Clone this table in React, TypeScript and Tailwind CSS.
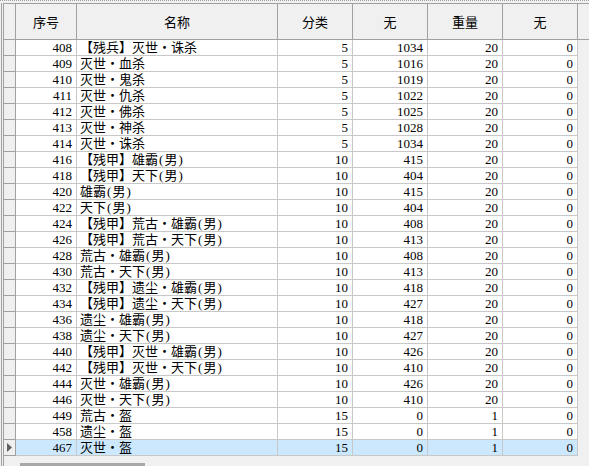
import React from 'react';

// 数据表格：装备列表
const ROWS: [number, string, number, number, number, number][] = [
    [408, '【残兵】灭世・诛杀', 5, 1034, 20, 0],
    [409, '灭世・血杀', 5, 1016, 20, 0],
    [410, '灭世・鬼杀', 5, 1019, 20, 0],
    [411, '灭世・仇杀', 5, 1022, 20, 0],
    [412, '灭世・佛杀', 5, 1025, 20, 0],
    [413, '灭世・神杀', 5, 1028, 20, 0],
    [414, '灭世・诛杀', 5, 1034, 20, 0],
    [416, '【残甲】雄霸(男)', 10, 415, 20, 0],
    [418, '【残甲】天下(男)', 10, 404, 20, 0],
    [420, '雄霸(男)', 10, 415, 20, 0],
    [422, '天下(男)', 10, 404, 20, 0],
    [424, '【残甲】荒古・雄霸(男)', 10, 408, 20, 0],
    [426, '【残甲】荒古・天下(男)', 10, 413, 20, 0],
    [428, '荒古・雄霸(男)', 10, 408, 20, 0],
    [430, '荒古・天下(男)', 10, 413, 20, 0],
    [432, '【残甲】遗尘・雄霸(男)', 10, 418, 20, 0],
    [434, '【残甲】遗尘・天下(男)', 10, 427, 20, 0],
    [436, '遗尘・雄霸(男)', 10, 418, 20, 0],
    [438, '遗尘・天下(男)', 10, 427, 20, 0],
    [440, '【残甲】灭世・雄霸(男)', 10, 426, 20, 0],
    [442, '【残甲】灭世・天下(男)', 10, 410, 20, 0],
    [444, '灭世・雄霸(男)', 10, 426, 20, 0],
    [446, '灭世・天下(男)', 10, 410, 20, 0],
    [449, '荒古・盔', 15, 0, 1, 0],
    [458, '遗尘・盔', 15, 0, 1, 0],
    [467, '灭世・盔', 15, 0, 1, 0],
];

const HEADERS = [
    { label: '序号', w: 'w-[61px]' },
    { label: '名称', w: 'w-[201px]' },
    { label: '分类', w: 'w-[75px]' },
    { label: '无', w: 'w-[75px]' },
    { label: '重量', w: 'w-[75px]' },
    { label: '无', w: 'w-[75px]' },
];

// half-width parens get a fixed cell, like the bitmap font in the original
function Name({ text }: { text: string }) {
    return (
        <>
            {text.split(/([()])/).map((part, i) =>
                part === '(' || part === ')' ? (
                    <span key={i} className="inline-block w-[6.5px] text-center">{part}</span>
                ) : (
                    <span key={i}>{part}</span>
                )
            )}
        </>
    );
}

export default function App() {
    const selected = ROWS.length - 1;

    return (
        <div className="w-[589px] h-[466px] overflow-hidden bg-[#f0f0f0] text-[13px] leading-[15px] text-black font-['Liberation_Serif','Noto_Sans_CJK_SC',serif]">
            {/* dotted top edge */}
            <div className="h-[3px] border-t border-dotted border-[#a0a0a0]" />

            <div className="ml-px h-[463px] border-l border-[#a0a0a0] pl-px">
                <div className="h-full border-l border-[#a0a0a0]">
                    {/* Header */}
                    <div className="flex h-[37px] border-t border-b border-[#a0a0a0]">
                        <div className="w-[12px] border-r border-[#a0a0a0]" />
                        {HEADERS.map((h, i) => (
                            <div
                                key={i}
                                className={`${h.w} flex items-center justify-center border-r border-[#a0a0a0] font-['Noto_Sans_CJK_SC',sans-serif]`}
                            >
                                {h.label}
                            </div>
                        ))}
                    </div>

                    {/* Rows */}
                    {ROWS.map((r, idx) => {
                        const isSel = idx === selected;
                        const cell = `border-r border-b border-[#c8c8c8] ${isSel ? 'bg-[#cce8ff]' : 'bg-white'}`;
                        return (
                            <div key={r[0]} className="flex h-[16px]">
                                <div className="w-[12px] flex items-center justify-center border-r border-b border-[#a0a0a0] bg-[#f0f0f0]">
                                    {isSel && (
                                        <svg width="5" height="9" viewBox="0 0 5 9">
                                            <path d="M0 0 L5 4.5 L0 9 Z" fill="#606060" />
                                        </svg>
                                    )}
                                </div>
                                <div className={`w-[61px] text-right pr-[4px] ${cell}`}>{r[0]}</div>
                                <div className={`w-[201px] pl-[3px] whitespace-nowrap overflow-hidden ${cell}`}>
                                    <Name text={r[1]} />
                                </div>
                                <div className={`w-[75px] text-right pr-[4px] ${cell}`}>{r[2]}</div>
                                <div className={`w-[75px] text-right pr-[4px] ${cell}`}>{r[3]}</div>
                                <div className={`w-[75px] text-right pr-[4px] ${cell}`}>{r[4]}</div>
                                <div className={`w-[75px] text-right pr-[4px] ${cell}`}>{r[5]}</div>
                            </div>
                        );
                    })}

                    {/* horizontal scrollbar thumb */}
                    <div className="pt-[7px] pl-[16px]">
                        <div className="w-[125px] h-[3px] bg-[#a8a8a8]" />
                    </div>
                </div>
            </div>
        </div>
    );
}
